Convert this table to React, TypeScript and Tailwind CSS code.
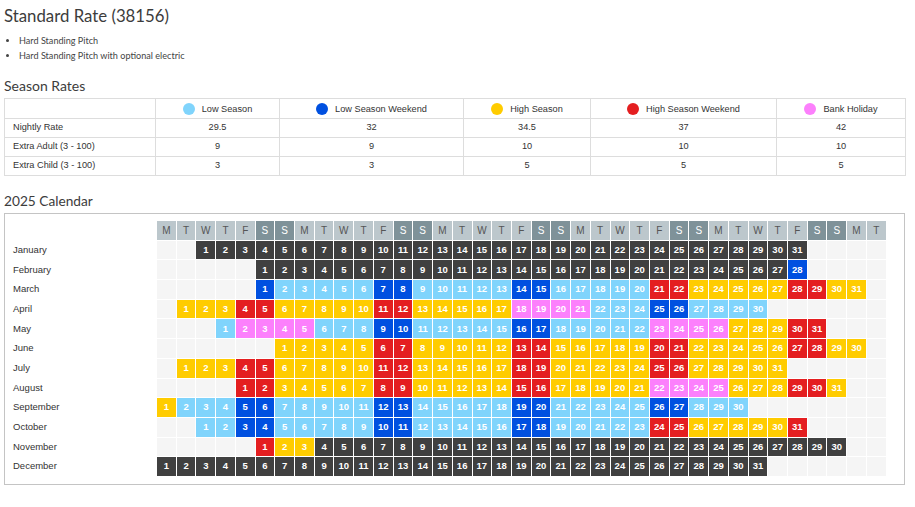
import React from 'react';

const head = { fontFamily: 'Lato, "Open Sans", sans-serif' };
const body = { fontFamily: '"Liberation Sans", Arial, sans-serif' };

const seasons = [
  { name: 'Low Season', dot: 'bg-[#80d4fc]', rates: ['29.5', '9', '3'] },
  { name: 'Low Season Weekend', dot: 'bg-[#0050e0]', rates: ['32', '9', '3'] },
  { name: 'High Season', dot: 'bg-[#ffcc00]', rates: ['34.5', '10', '5'] },
  { name: 'High Season Weekend', dot: 'bg-[#e41e20]', rates: ['37', '10', '5'] },
  { name: 'Bank Holiday', dot: 'bg-[#fc80fc]', rates: ['42', '10', '5'] },
];

const rowLabels = ['Nightly Rate', 'Extra Adult (3 - 100)', 'Extra Child (3 - 100)'];
const colWidths = ['w-[151px]', 'w-[124px]', 'w-[184px]', 'w-[127px]', 'w-[186px]', 'w-[129px]'];

const dayColor: Record<string, string> = {
  D: 'bg-[#404040]',
  L: 'bg-[#80d4fc]',
  B: 'bg-[#0050e0]',
  Y: 'bg-[#ffcc00]',
  R: 'bg-[#e41e20]',
  P: 'bg-[#fc80fc]',
};

// one letter per day, colour key above
const months: { name: string; offset: number; days: string }[] = [
  { name: 'January', offset: 2, days: 'D'.repeat(31) },
  { name: 'February', offset: 5, days: 'D'.repeat(27) + 'B' },
  { name: 'March', offset: 5, days: 'BLLLLLBBLLLLLBBLLLLLRRYYYYYRRYY' },
  { name: 'April', offset: 1, days: 'YYYRRYYYYYRRYYYYYPPPPLLLBBLLLL' },
  { name: 'May', offset: 3, days: 'LPPPPLLLBBLLLLLBBLLLLLPPPPYYYRR' },
  { name: 'June', offset: 6, days: 'YYYYYRRYYYYYRRYYYYYRRYYYYYRRYY' },
  { name: 'July', offset: 1, days: 'YYYRRYYYYYRRYYYYYRRYYYYYRRYYYYY' },
  { name: 'August', offset: 4, days: 'RRYYYYYRRYYYYYRRYYYYYPPPPYYYRRY' },
  { name: 'September', offset: 0, days: 'YLLLBBLLLLLBBLLLLLBBLLLLLBBLLL' },
  { name: 'October', offset: 2, days: 'LLBBLLLLLBBLLLLLBBLLLLLRRYYYYYR' },
  { name: 'November', offset: 5, days: 'RYY' + 'D'.repeat(27) },
  { name: 'December', offset: 0, days: 'D'.repeat(31) },
];

const weekLetters = ['M', 'T', 'W', 'T', 'F', 'S', 'S'];
const COLS = 37;

function MonthRow({ name, offset, days }: { name: string; offset: number; days: string }) {
  const cells = [];
  for (let i = 0; i < COLS; i++) {
    const d = i - offset;
    if (d >= 0 && d < days.length) {
      cells.push(
        <div
          key={i}
          className={`${dayColor[days[d]]} flex items-center justify-center text-white font-bold text-[9.5px]`}
        >
          {d + 1}
        </div>
      );
    } else {
      cells.push(<div key={i} className="bg-[#f5f5f5]" />);
    }
  }
  return (
    <>
      <div className="flex items-center text-[9.5px] text-[#333]">{name}</div>
      {cells}
    </>
  );
}

export default function App() {
  return (
    <div className="w-[915px] min-h-[507px] bg-white px-[4px] pb-4 text-[#333]">
      <h1 style={head} className="pt-[4px] text-[16.8px] leading-[24px] text-[#3c3c3c]">
        Standard Rate (38156)
      </h1>

      <ul style={head} className="mt-[5px] text-[9.1px] leading-[15px] text-[#444]">
        {['Hard Standing Pitch', 'Hard Standing Pitch with optional electric'].map((t) => (
          <li key={t} className="flex items-center">
            <span className="ml-[2px] w-[3px] h-[3px] rounded-full bg-[#444]" />
            <span className="ml-[10px]">{t}</span>
          </li>
        ))}
      </ul>

      <h2 style={head} className="mt-[13px] text-[14px] leading-[20px] text-[#3c3c3c]">
        Season Rates
      </h2>

      <table style={body} className="mt-[2px] w-[901px] table-fixed border-collapse text-[9.2px] text-[#333]">
        <colgroup>
          {colWidths.map((w, i) => (
            <col key={i} className={w} />
          ))}
        </colgroup>
        <thead>
          <tr className="h-[20px]">
            <th className="border border-[#ddd]" />
            {seasons.map((s) => (
              <th key={s.name} className="border border-[#ddd] font-normal align-middle p-0">
                <div className="flex items-center justify-center gap-[7px] pt-[2px]">
                  <span className={`w-[12px] h-[12px] rounded-full ${s.dot}`} />
                  {s.name}
                </div>
              </th>
            ))}
          </tr>
        </thead>
        <tbody>
          {rowLabels.map((label, r) => (
            <tr key={label} className="h-[19px]">
              <td className="border border-[#ddd] pl-[8px]">{label}</td>
              {seasons.map((s) => (
                <td key={s.name} className="border border-[#ddd] text-center">
                  {s.rates[r]}
                </td>
              ))}
            </tr>
          ))}
        </tbody>
      </table>

      <h2 style={head} className="mt-[15px] text-[13.7px] leading-[20px] text-[#3c3c3c]">
        2025 Calendar
      </h2>

      <div className="mt-[2px] w-[901px] border border-[#c4c4c4] pl-[8px] pr-[17px] pt-[7px] pb-[8px]">
        <div
          style={body}
          className="grid grid-cols-[143px_repeat(37,18.73px)] auto-rows-[18.7px] gap-px"
        >
          <div />
          {Array.from({ length: COLS }, (_, i) => {
            const weekend = i % 7 >= 5;
            return (
              <div
                key={i}
                className={`flex items-center justify-center text-[10px] ${
                  weekend ? 'bg-[#7f9299] text-white' : 'bg-[#bcc7cc] text-[#555]'
                }`}
              >
                {weekLetters[i % 7]}
              </div>
            );
          })}
          {months.map((m) => (
            <MonthRow key={m.name} {...m} />
          ))}
        </div>
      </div>
    </div>
  );
}
